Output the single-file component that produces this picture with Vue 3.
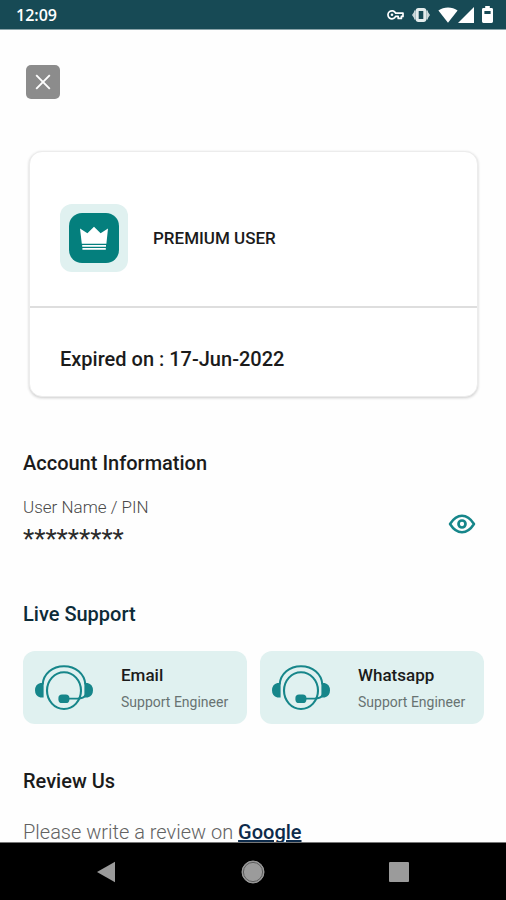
<script setup>
import { ref } from 'vue'

const showPin = ref(false)
const pin = '*********'
const channels = ['Email', 'Whatsapp']
</script>

<template>
  <div class="screen">
    <header class="status">
      <span class="clock">12:09</span>
      <div class="status-icons">
        <svg class="key" width="18" height="12" viewBox="0 0 18 12" aria-hidden="true">
          <path d="M8.6 4.2H16V7.4H14.4V9.4H11.2V7.4H8.6A4 4 0 1 1 8.6 4.2Z" fill="none" stroke="#fff" stroke-width="1.7" stroke-linejoin="round" />
          <circle cx="5" cy="5.8" r="1.3" fill="#fff" />
        </svg>
        <svg class="vibrate" width="18" height="16" viewBox="0 0 18 16" aria-hidden="true">
          <path d="M0 8L3 3.6V12.4ZM18 8L15 3.6V12.4Z" fill="#c6d3d5" />
          <rect x="5.2" y="2.6" width="7.6" height="10.8" rx="1.2" fill="none" stroke="#e4ecec" stroke-width="3" />
          <path d="M3 3.6V12.4M15 3.6V12.4" stroke="#d2dedf" stroke-width="1.4" />
        </svg>
        <svg class="wifi" width="20" height="16" viewBox="0 0 20 16" aria-hidden="true">
          <path d="M0.4 3.6C5.8-0.6 14.2-0.6 19.6 3.6L10 15.8Z" fill="#fff" />
        </svg>
        <svg class="signal" width="16" height="16" viewBox="0 0 16 16" aria-hidden="true">
          <path d="M0 16L16 0V16Z" fill="#fff" />
        </svg>
        <svg class="battery" width="11" height="17" viewBox="0 0 11 17" aria-hidden="true">
          <path d="M3.2 0H7.8V2H9.6Q11 2 11 3.4V15.6Q11 17 9.6 17H1.4Q0 17 0 15.6V3.4Q0 2 1.4 2H3.2Z" fill="#fff" />
          <rect x="2.4" y="5" width="6.2" height="3" fill="#174a55" />
        </svg>
      </div>
    </header>

    <main class="content">
      <button class="close" type="button" aria-label="Close">
        <svg width="16" height="16" viewBox="0 0 16 16" aria-hidden="true">
          <path d="M1.2 1.2L14.8 14.8M14.8 1.2L1.2 14.8" stroke="#fff" stroke-width="1.9" />
        </svg>
      </button>

      <section class="card">
        <div class="plan">
          <span class="badge">
            <span class="badge-core">
              <svg width="30" height="26" viewBox="0 0 30 26" aria-hidden="true">
                <path d="M1 3.6L8.4 8.2L15 1.8L21.6 8.2L29 3.6L27.4 18.8H2.8Z" fill="#fff" />
                <path d="M3.2 20.8H27M3.4 23.8H26.8" stroke="#fff" stroke-width="1.8" />
              </svg>
            </span>
          </span>
          <span class="plan-name">PREMIUM USER</span>
        </div>
        <p class="expiry">Expired on : 17-Jun-2022</p>
      </section>

      <section class="account">
        <h2>Account Information</h2>
        <div class="account-row">
          <div>
            <p class="label">User Name / PIN</p>
            <p class="pin">{{ pin }}</p>
          </div>
          <button class="eye" type="button" aria-label="Show PIN" :aria-pressed="showPin" @click="showPin = !showPin">
            <svg width="28" height="20" viewBox="0 0 28 20" aria-hidden="true">
              <path d="M2 10Q7.2 1.8 14 1.8T26 10Q20.8 18.2 14 18.2T2 10Z" fill="none" stroke="#16868a" stroke-width="2.5" stroke-linejoin="round" />
              <circle cx="14" cy="10" r="3.5" fill="none" stroke="#16868a" stroke-width="2.7" />
            </svg>
          </button>
        </div>
      </section>

      <section class="support">
        <h2 class="deep">Live Support</h2>
        <div class="channels">
          <button v-for="name in channels" :key="name" class="channel" type="button">
            <svg width="60" height="48" viewBox="0 0 60 48" aria-hidden="true">
              <g fill="none" stroke="#16868a">
                <path d="M8.6 20.5C9.5 9.4 18.5 2.2 30 2.2S50.5 9.4 51.4 20.5" stroke-width="2.1" />
                <ellipse cx="30" cy="26.6" rx="17" ry="18.4" stroke-width="2.1" />
                <path d="M31 34.6H43.5Q50 34.4 51.6 31" stroke-width="1.8" />
              </g>
              <path d="M9.6 19V33.6H6.4Q1 32 1 26.3T6.4 19ZM50.4 19V33.6H53.6Q59 32 59 26.3T53.6 19Z" fill="#16868a" />
              <rect x="24.4" y="30.4" width="11" height="8.6" rx="3.6" fill="#16868a" />
            </svg>
            <span class="channel-text">
              <span class="channel-name">{{ name }}</span>
              <span class="channel-role">Support Engineer</span>
            </span>
          </button>
        </div>
      </section>

      <section class="review">
        <h2>Review Us</h2>
        <p class="review-text">Please write a review on <a href="#google">Google</a></p>
      </section>
    </main>

    <nav class="system-nav">
      <button type="button" aria-label="Back">
        <svg width="24" height="24" viewBox="0 0 24 24" aria-hidden="true"><path d="M3 12L21 1.8V22.2Z" fill="#9b9b9b" /></svg>
      </button>
      <button type="button" aria-label="Home">
        <svg width="24" height="24" viewBox="0 0 24 24" aria-hidden="true">
          <circle cx="12" cy="12" r="11" fill="#9b9b9b" stroke="#9b9b9b" />
          <circle cx="12" cy="12" r="9.6" fill="none" stroke="#5c5c5c" />
        </svg>
      </button>
      <button type="button" aria-label="Recent apps">
        <svg width="24" height="24" viewBox="0 0 24 24" aria-hidden="true"><rect x="2" y="2" width="20" height="20" rx="1" fill="#9b9b9b" /></svg>
      </button>
    </nav>
  </div>
</template>

<style>
body {
  margin: 0;
  background: #fff;
}
</style>

<style scoped>
.screen {
  display: flex;
  flex-direction: column;
  height: 100vh;
  font-family: Roboto, "Liberation Sans", sans-serif;
  color: #1b1b1b;
  background: #fefefe;
}
h2,
p {
  margin: 0;
}
button {
  padding: 0;
  border: 0;
  background: none;
  font: inherit;
  color: inherit;
  text-align: left;
}
svg {
  display: block;
  flex: none;
}
.status {
  display: flex;
  flex: none;
  align-items: center;
  justify-content: space-between;
  box-sizing: border-box;
  height: 30px;
  padding: 0 13px 0 16px;
  background: #174a55;
  border-bottom: 1px solid #8ba4a9;
}
.clock {
  font-family: "Open Sans", Roboto, sans-serif;
  font-size: 16px;
  font-weight: 600;
  color: #fff;
}
.status-icons {
  display: flex;
  align-items: center;
}
.vibrate {
  margin: 0 8px 0 7px;
}
.battery {
  margin-left: 8px;
}
.content {
  flex: 1;
  min-height: 0;
  overflow: hidden;
  padding: 35px 22px 0 23px;
}
.close {
  display: grid;
  place-items: center;
  width: 34px;
  height: 34px;
  margin-left: 3px;
  border-radius: 5px;
  background: #8c8c8c;
}
.card {
  margin: 52px 6px 0;
  border: 1px solid #ececec;
  border-radius: 13px;
  background: #fff;
  box-shadow: 0 1px 3px rgba(0, 0, 0, 0.2);
}
.plan {
  display: flex;
  align-items: center;
  gap: 25px;
  padding: 52px 30px 34px;
  border-bottom: 2px solid #dedede;
}
.badge {
  display: grid;
  place-items: center;
  width: 68px;
  height: 68px;
  border-radius: 12px;
  background: #e0f1f0;
}
.badge-core {
  display: grid;
  place-items: center;
  width: 50px;
  height: 50px;
  border-radius: 13px;
  background: #047f7d;
}
.plan-name {
  font-size: 17px;
  font-weight: 500;
  line-height: 24px;
}
.expiry {
  padding: 38px 30px 24px;
  font-size: 20px;
  font-weight: 500;
  line-height: 26px;
}
h2 {
  font-size: 20px;
  font-weight: 500;
  line-height: 26px;
}
.deep {
  color: #0d2b38;
}
.account {
  margin-top: 53px;
}
.account-row {
  display: flex;
  align-items: center;
  justify-content: space-between;
  padding-top: 18px;
}
.label {
  font-size: 17px;
  font-weight: 300;
  line-height: 26px;
  color: #4a4a4a;
}
.pin {
  padding: 8px 0 4px;
  font-size: 26px;
  line-height: 22px;
  color: #2b2b2b;
}
.eye {
  margin-right: 8px;
}
.support {
  margin-top: 47px;
}
.channels {
  display: grid;
  grid-template-columns: 1fr 1fr;
  gap: 13px;
  padding-top: 24px;
}
.channel {
  display: flex;
  align-items: center;
  gap: 27px;
  height: 73px;
  padding-left: 11px;
  border-radius: 12px;
  background: #e0f1f0;
}
.channel-text {
  display: flex;
  flex-direction: column;
  gap: 3px;
  padding-top: 2px;
  white-space: nowrap;
}
.channel-name {
  font-size: 17px;
  font-weight: 500;
  line-height: 24px;
}
.channel-role {
  font-size: 14px;
  line-height: 24px;
  color: #687372;
}
.review {
  margin-top: 44px;
}
.review-text {
  padding-top: 25px;
  font-size: 20px;
  font-weight: 300;
  line-height: 26px;
  color: #626262;
}
.review-text a {
  font-weight: 500;
  color: #0d2b4b;
}
.system-nav {
  display: flex;
  flex: none;
  align-items: center;
  justify-content: space-between;
  box-sizing: border-box;
  height: 58px;
  padding: 0 95px 0 94px;
  background: #000;
  border-top: 1px solid #777;
}
</style>
